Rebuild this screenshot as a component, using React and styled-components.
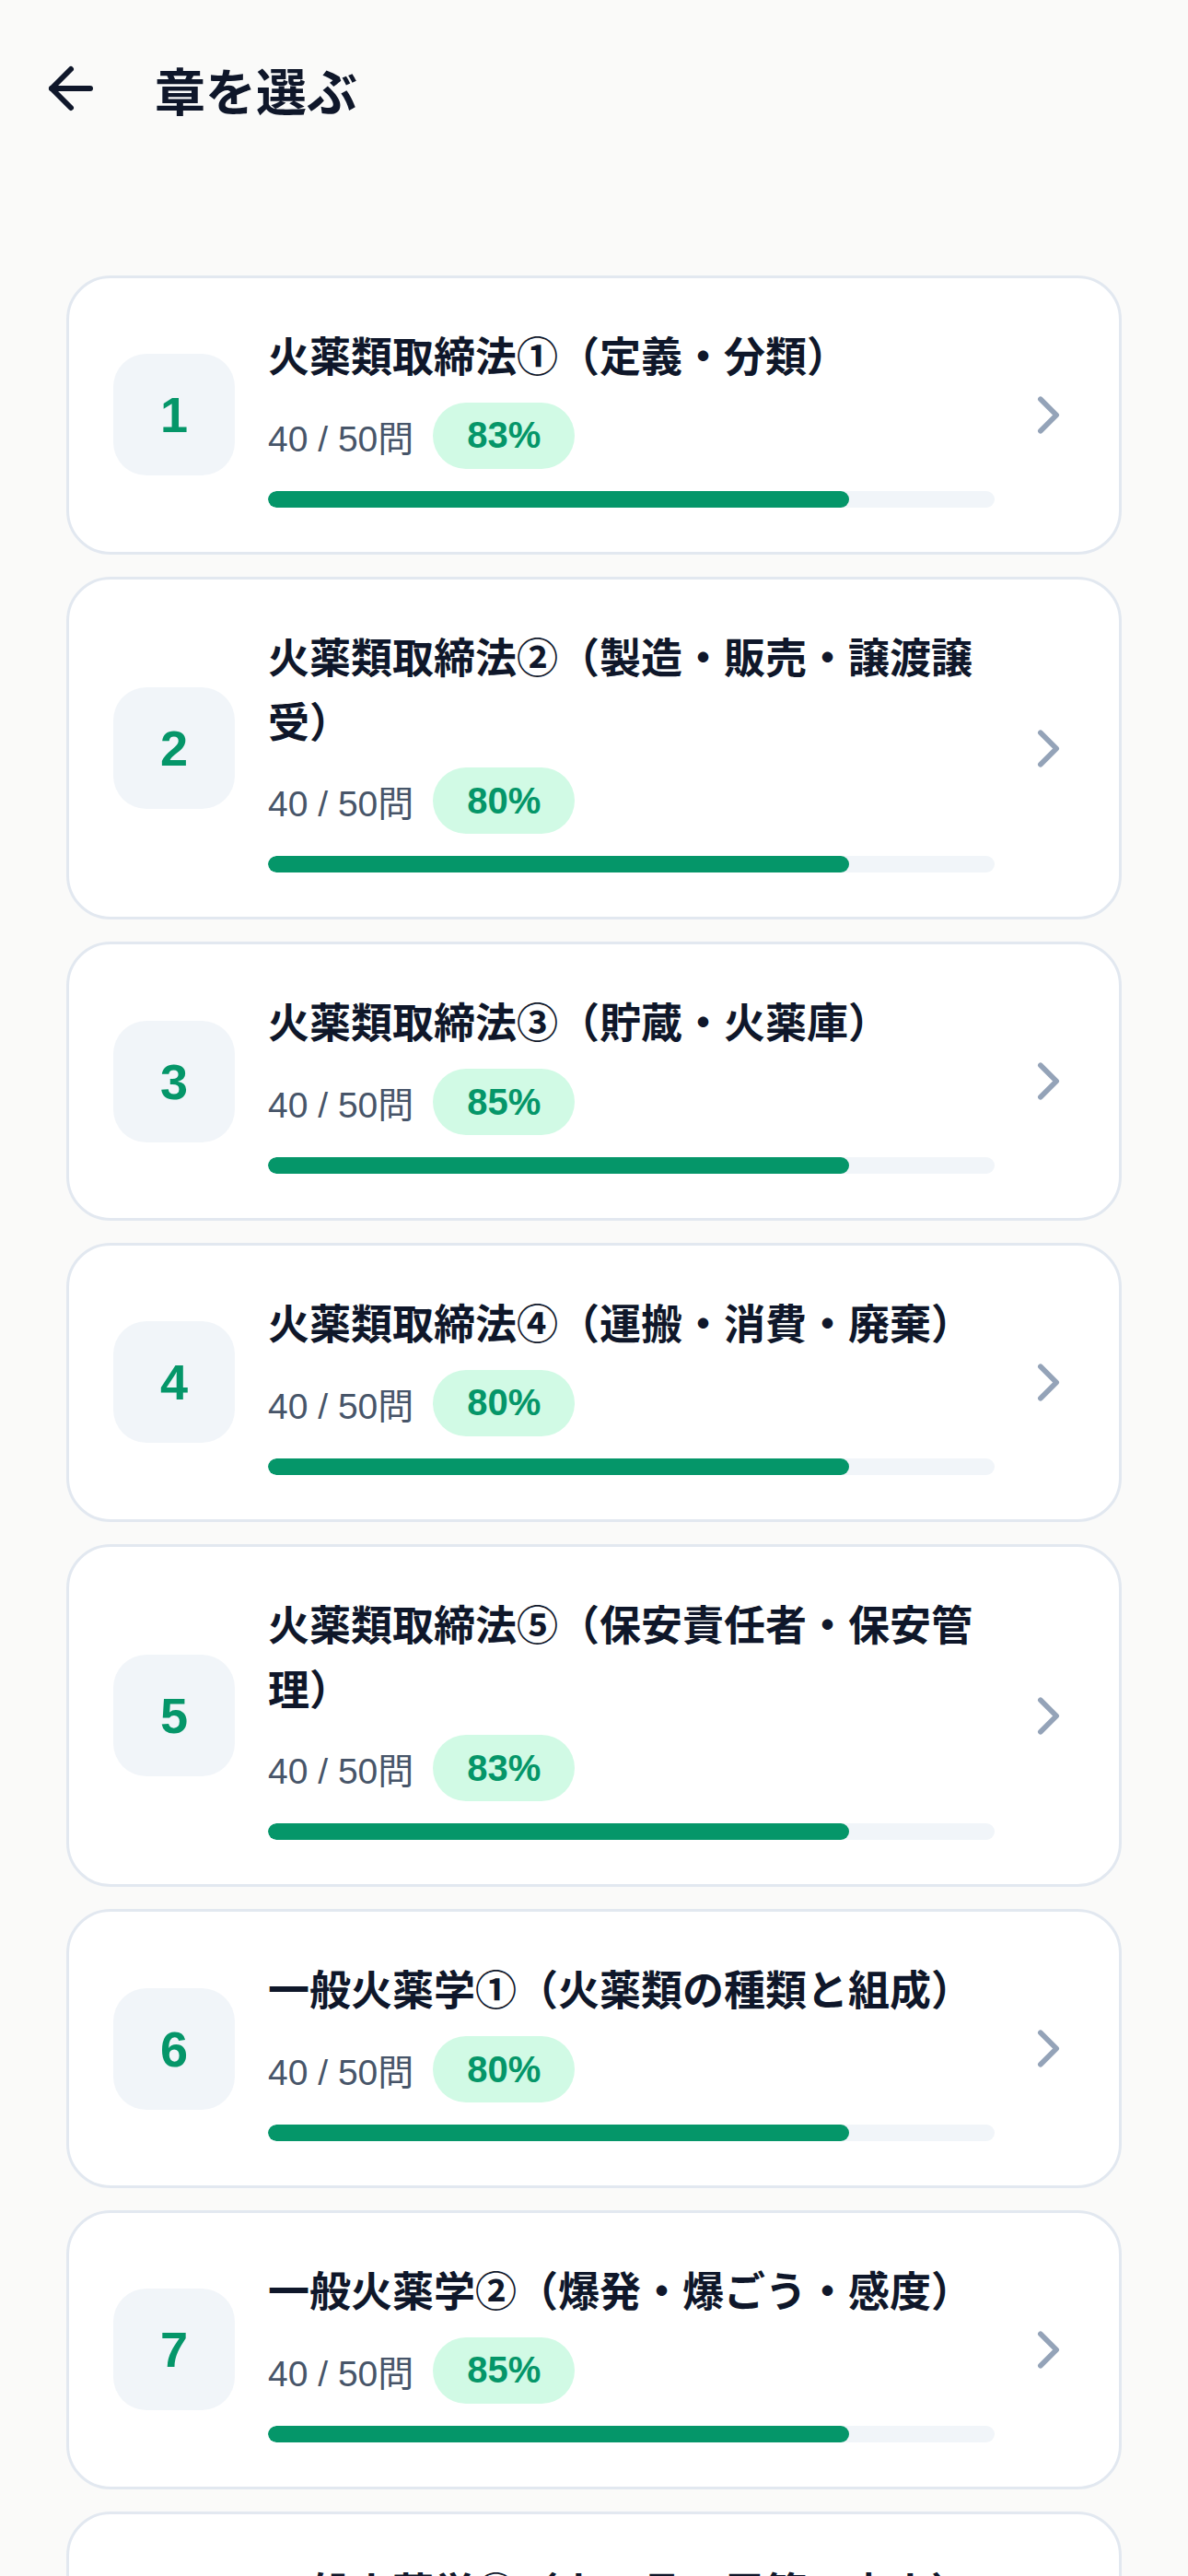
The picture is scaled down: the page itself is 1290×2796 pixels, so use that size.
import React from "react";
import styled, { createGlobalStyle } from "styled-components";
import { ArrowLeft, ChevronRight } from "lucide-react";

const chapters = [
  { no: 1, title: "火薬類取締法①（定義・分類）", done: 40, total: 50, rate: 83 },
  { no: 2, title: "火薬類取締法②（製造・販売・譲渡譲受）", done: 40, total: 50, rate: 80 },
  { no: 3, title: "火薬類取締法③（貯蔵・火薬庫）", done: 40, total: 50, rate: 85 },
  { no: 4, title: "火薬類取締法④（運搬・消費・廃棄）", done: 40, total: 50, rate: 80 },
  { no: 5, title: "火薬類取締法⑤（保安責任者・保安管理）", done: 40, total: 50, rate: 83 },
  { no: 6, title: "一般火薬学①（火薬類の種類と組成）", done: 40, total: 50, rate: 80 },
  { no: 7, title: "一般火薬学②（爆発・爆ごう・感度）", done: 40, total: 50, rate: 85 },
  { no: 8, title: "一般火薬学③（火工品・雷管・点火）", done: 40, total: 50, rate: 80 },
];

const GlobalStyle = createGlobalStyle`
  body {
    margin: 0;
    background: #fafaf9;
    font-family: "Liberation Sans", "Noto Sans CJK JP", sans-serif;
    color: #0f172a;
  }
`;

export default function App() {
  return (
    <Page>
      <GlobalStyle />
      <Header>
        <BackButton aria-label="戻る">
          <ArrowLeft size={72} strokeWidth={2} color="#0f172a" />
        </BackButton>
        <Title>章を選ぶ</Title>
      </Header>

      <List>
        {chapters.map((c) => (
          <Card key={c.no}>
            <NumberBox>{c.no}</NumberBox>
            <Body>
              <ChapterTitle>{c.title}</ChapterTitle>
              <Stats>
                <Count>
                  {c.done} / {c.total}問
                </Count>
                <Badge>{c.rate}%</Badge>
              </Stats>
              <Track>
                <Fill style={{ width: `${(c.done / c.total) * 100}%` }} />
              </Track>
            </Body>
            <Chevron>
              <ChevronRight size={69} strokeWidth={2} color="#94a3b8" />
            </Chevron>
          </Card>
        ))}
      </List>
    </Page>
  );
}

const Page = styled.div`
  min-height: 2796px;
  background: #fafaf9;
`;

const Header = styled.header`
  height: 192px;
  display: flex;
  align-items: center;
  gap: 31px;
  padding-left: 17px;
`;

const BackButton = styled.button`
  display: flex;
  align-items: center;
  justify-content: center;
  padding: 24px;
  border: none;
  background: transparent;
  cursor: pointer;
`;

const Title = styled.h1`
  margin: 0;
  font-family: "Noto Sans CJK JP", sans-serif;
  font-size: 55px;
  font-weight: 700;
  line-height: 1.4;
  color: #0f172a;
`;

const List = styled.main`
  display: flex;
  flex-direction: column;
  gap: 24px;
  padding: 107px 72px 72px;
`;

const Card = styled.div`
  display: flex;
  align-items: center;
  gap: 36px;
  padding: 48px;
  background: #ffffff;
  border: 3px solid #e2e8f0;
  border-radius: 48px;
`;

const NumberBox = styled.div`
  flex: 0 0 132px;
  height: 132px;
  display: flex;
  align-items: center;
  justify-content: center;
  border-radius: 36px;
  background: #f1f5f9;
  color: #059669;
  font-family: "Liberation Sans", sans-serif;
  font-size: 54px;
  font-weight: 700;
`;

const Body = styled.div`
  flex: 1;
  min-width: 0;
  display: flex;
  flex-direction: column;
`;

const ChapterTitle = styled.div`
  font-family: "Noto Sans CJK JP", sans-serif;
  font-size: 45px;
  font-weight: 700;
  line-height: 1.55;
  color: #0f172a;
`;

const Stats = styled.div`
  display: flex;
  align-items: center;
  gap: 21px;
  margin-top: 17px;
`;

const Count = styled.span`
  font-size: 39px;
  color: #475569;
`;

const Badge = styled.span`
  display: inline-flex;
  align-items: center;
  height: 72px;
  padding: 0 37px;
  border-radius: 999px;
  background: #d1fae5;
  color: #059669;
  font-size: 40px;
  font-weight: 700;
`;

const Track = styled.div`
  height: 18px;
  margin-top: 24px;
  border-radius: 999px;
  background: #f1f5f9;
  overflow: hidden;
`;

const Fill = styled.div`
  height: 100%;
  border-radius: 999px;
  background: #059669;
`;

const Chevron = styled.div`
  flex: 0 0 69px;
  display: flex;
  align-items: center;
  justify-content: center;
  margin: 0 -6px 0 -12px;
`;
